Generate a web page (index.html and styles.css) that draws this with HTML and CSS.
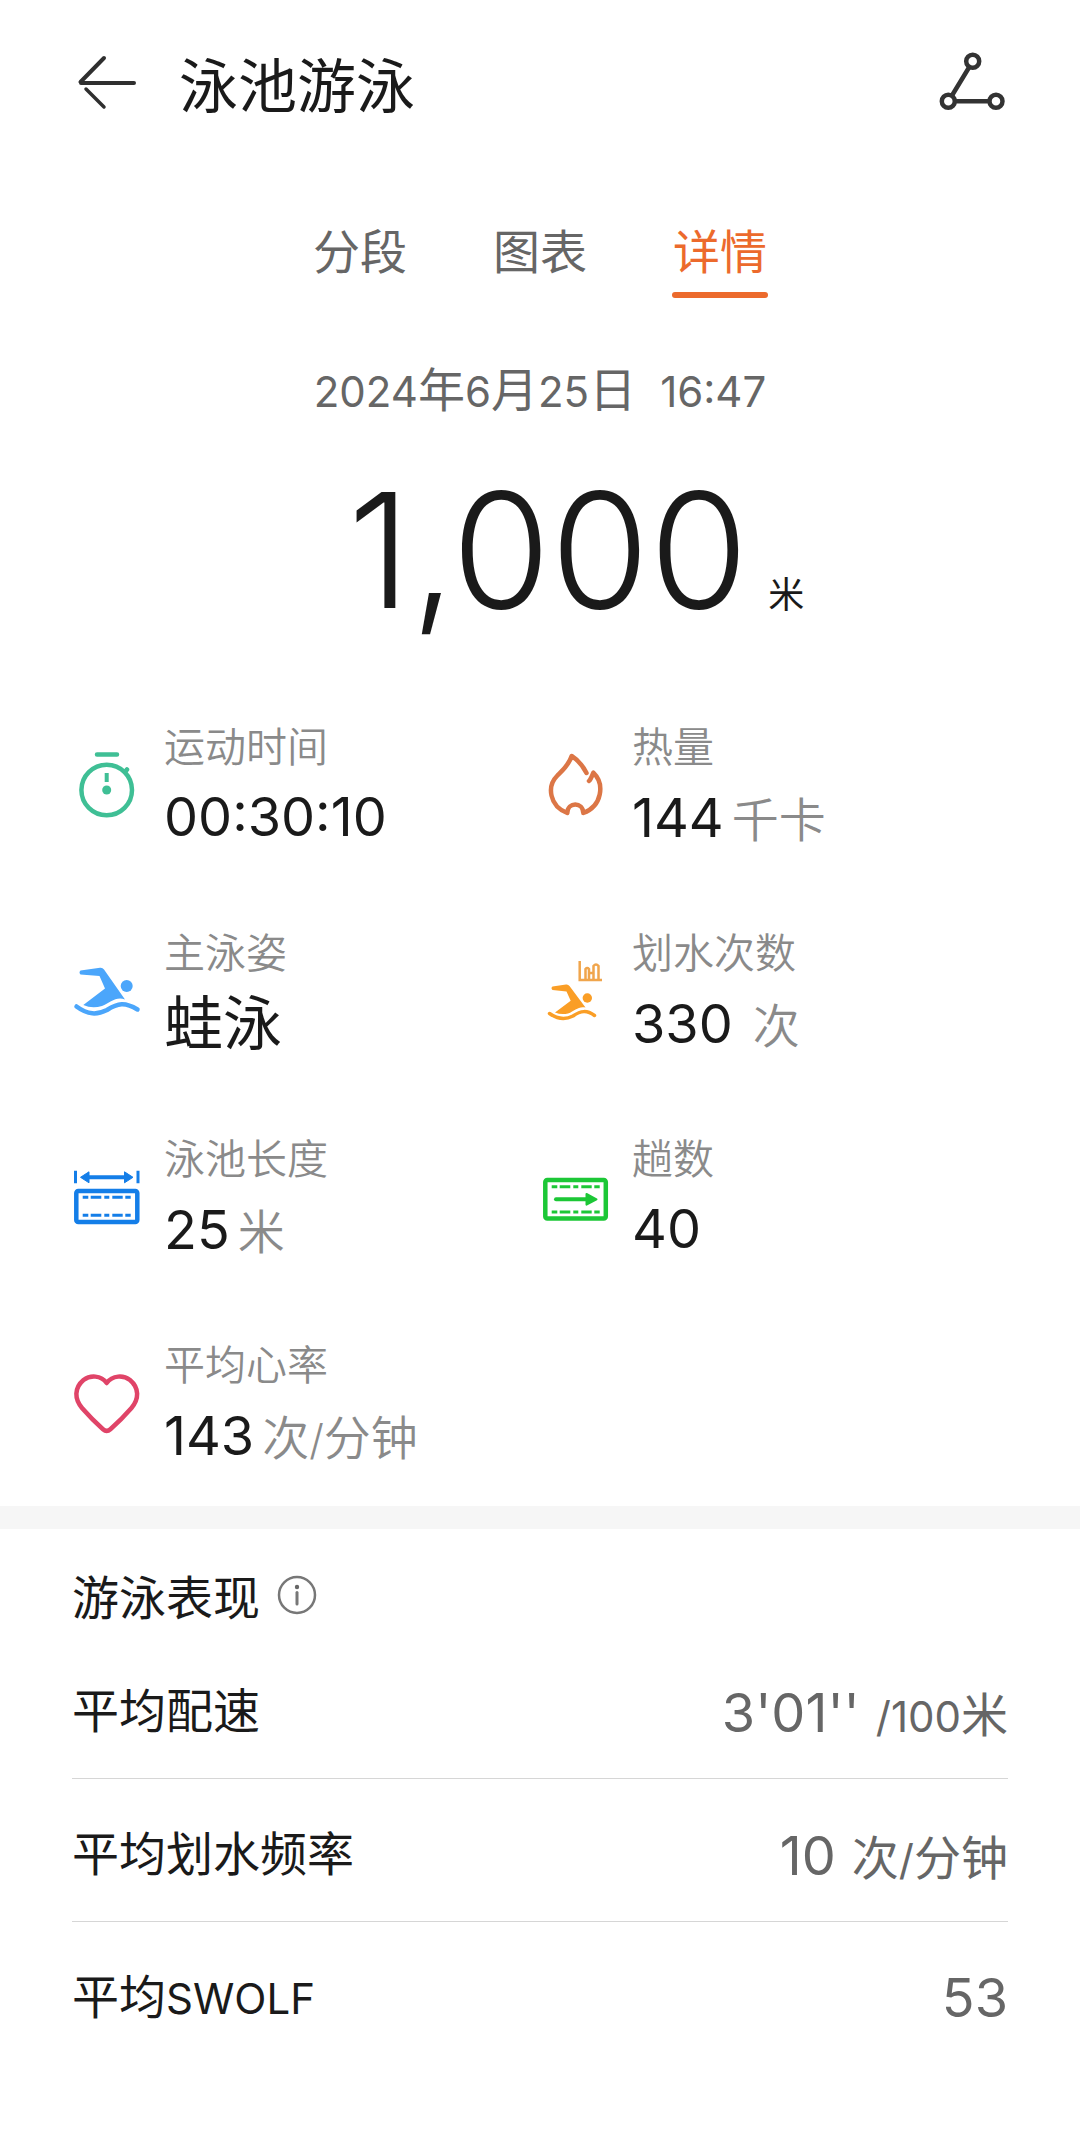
FILE: index.html
```html
<!DOCTYPE html>
<html lang="zh-CN">
<head>
<meta charset="utf-8">
<meta name="viewport" content="width=device-width, initial-scale=1">
<title>泳池游泳</title>
<link rel="stylesheet" href="styles.css">
</head>
<body>
<header class="topbar">
  <button class="icon-button" type="button" aria-label="返回">
    <svg class="icon" viewBox="0 0 68 68" fill="none" stroke="#2f2f2f" stroke-width="4" stroke-linecap="round"><path d="M32 9 L8.500 33 M9 34H62"/><path d="M14 40L32 58" stroke-width="3.500"/></svg>
  </button>
  <h1 class="title">泳池游泳</h1>
  <button class="icon-button" type="button" aria-label="轨迹分享">
    <svg class="icon" viewBox="0 0 68 68" fill="none" stroke="#333" stroke-width="4.500"><circle cx="32.700" cy="12.300" r="6.500"/><circle cx="8.300" cy="52.300" r="6.500"/><circle cx="56" cy="52.300" r="6.500"/><path d="M29.300 18L12 46.500M15 52.300H49.500"/></svg>
  </button>
</header>

<main>
  <nav class="tabs">
    <button class="tab" type="button">分段</button>
    <button class="tab" type="button">图表</button>
    <button class="tab active" type="button" aria-current="page">详情</button>
  </nav>

  <p class="date"><span><span class="num">2024</span>年<span class="num">6</span>月<span class="num">25</span>日</span><span class="num">16:47</span></p>
  <p class="distance"><span class="distance-value">1,000</span><span class="distance-unit">米</span></p>

  <dl class="stats">
    <div class="stat">
      <svg class="icon" viewBox="0 0 68 68" fill="none" stroke="#3fbf95" stroke-width="4.500" stroke-linecap="round"><circle cx="34.700" cy="37" r="25.300"/><path d="M25 1.500H45M53 19L55 16.500"/><path d="M34.700 20V29" stroke-width="4" stroke-linecap="butt"/><circle cx="34.700" cy="37" r="4.500" fill="#3fbf95" stroke="none"/></svg>
      <div class="stat-text"><dt>运动时间</dt><dd><span class="figure">00:30:10</span></dd></div>
    </div>
    <div class="stat">
      <svg class="icon" viewBox="0 0 68 68" fill="none" stroke="#dc7646" stroke-width="4.500" stroke-linecap="round" stroke-linejoin="round"><path d="M46.500 20C43 13 38 7 31.700 3C29 12 22 18 17 23C7 33 9 53 27.300 60C27.500 48.500 43 48.500 43.300 60C62 53 65 31 53.300 19.700C52 23 51 26 49 28"/></svg>
      <div class="stat-text"><dt>热量</dt><dd><span class="figure">144</span><span class="unit">千卡</span></dd></div>
    </div>
    <div class="stat">
      <svg class="icon" viewBox="0 0 68 68" fill="#4ba6fb"><path d="M8.500 11.500L28 8.700Q30.500 8.300 32 10.500L53 40.500C44 37 38 44 30 47Q20 50 11.300 46L33 29.500L27.500 17L8.500 15.500Q6.500 13.500 8.500 11.500Z"/><circle cx="54.700" cy="27" r="6"/><path d="M4.500 47.500C16 56 25 56 35 51C46 44 53 43 65.500 50.500" fill="none" stroke="#4ba6fb" stroke-width="4.500" stroke-linecap="round"/></svg>
      <div class="stat-text"><dt>主泳姿</dt><dd><span class="stroke-name">蛙泳</span></dd></div>
    </div>
    <div class="stat">
      <svg class="icon" viewBox="0 0 68 68" fill="#fa9e26"><path d="M12.500 27.500L26 25.500Q28 25 29.500 27L45.500 48.500C38 47 35 52 28 54.500Q21 56 15 53.500L30.700 41.700L26.500 32.500L12.500 31Q10.500 29 12.500 27.500Z"/><circle cx="47.300" cy="39" r="4.700"/><path d="M9.500 54.500C18 60.500 25 61 33 57C41 51.500 47 51 54.500 56.500" fill="none" stroke="#fa9e26" stroke-width="3.500" stroke-linecap="round"/><path d="M39.700 2V21H62M45.500 20V10Q47.200 8 49 10V20M49 20V14H53.500V20M53.500 20V7Q56 4 58.500 7V20" fill="none" stroke="#f0a54c" stroke-width="2.500"/></svg>
      <div class="stat-text"><dt>划水次数</dt><dd><span class="figure">330</span><span class="unit spaced">次</span></dd></div>
    </div>
    <div class="stat">
      <svg class="icon" viewBox="0 0 68 68" fill="none" stroke="#147ee8"><rect x="4.300" y="26" width="61" height="31" rx="2" stroke-width="4.500"/><path d="M3.500 5.700V18.300M66 5.700V18.300" stroke-width="3"/><path d="M14 12.300H56" stroke-width="4"/><path d="M8.500 12.300L17 6.800V17.800ZM61 12.300L52.500 6.800V17.800Z" fill="#147ee8" stroke-width="1" stroke-linejoin="round"/><path d="M10.700 32.300H16.300M18.700 32.300H29.300M32.300 32.300H37.300M40.300 32.300H50.700M53.300 32.300H58.700M10.700 50.300H16.300M18.700 50.300H29.300M32.300 50.300H37.300M40.300 50.300H50.700M53.300 50.300H58.700" stroke-width="3"/></svg>
      <div class="stat-text"><dt>泳池长度</dt><dd><span class="figure">25</span><span class="unit">米</span></dd></div>
    </div>
    <div class="stat">
      <svg class="icon" viewBox="0 0 68 68" fill="none" stroke="#1cc736"><rect x="5.300" y="15" width="60.500" height="38.500" rx="2" stroke-width="4.500"/><path d="M16 34.300H47" stroke-width="4" stroke-linecap="round"/><path d="M46.500 29L56.500 34.300L46.500 39.600Z" fill="#1cc736" stroke-width="2" stroke-linejoin="round"/><path d="M11.700 21.700H17.300M19.700 21.700H30.300M33.300 21.700H38.300M41.300 21.700H51.700M54.300 21.700H59.700M11.700 47H17.300M19.700 47H30.300M33.300 47H38.300M41.300 47H51.700M54.300 47H59.700" stroke-width="3"/></svg>
      <div class="stat-text"><dt>趟数</dt><dd><span class="figure">40</span></dd></div>
    </div>
    <div class="stat">
      <svg class="icon" viewBox="0 0 68 68" fill="none" stroke="#e04468" stroke-width="4.500" stroke-linejoin="round"><path d="M34.700 12C29 4 18 4 11.500 9C2 17 2.500 28 10 37Q20 48.500 31 58.200Q34.700 61.500 38.400 58.200Q49.500 48.500 59.500 37C67 28 67.500 17 58 9C51.500 4 40.500 4 34.700 12Z"/></svg>
      <div class="stat-text"><dt>平均心率</dt><dd><span class="figure">143</span><span class="unit">次<span class="num">/</span>分钟</span></dd></div>
    </div>
  </dl>

  <section class="performance">
    <div class="section-head">
      <h2>游泳表现</h2>
      <button class="info" type="button" aria-label="说明">
        <svg class="info-icon" viewBox="0 0 40 40" fill="none" stroke="#777" stroke-width="2.500"><circle cx="20" cy="20" r="18"/><circle cx="20" cy="12" r="2.200" fill="#666" stroke="none"/><path d="M20 17.500V29" stroke-width="3" stroke-linecap="round"/></svg>
      </button>
    </div>
    <dl class="metrics">
      <div class="metric"><dt>平均配速</dt><dd><span class="figure">3'01''</span><span class="per"><span class="num">/100</span>米</span></dd></div>
      <div class="metric"><dt>平均划水频率</dt><dd><span class="figure">10</span><span class="per">次<span class="num">/</span>分钟</span></dd></div>
      <div class="metric"><dt>平均<span class="num">SWOLF</span></dt><dd><span class="figure">53</span></dd></div>
    </dl>
  </section>
</main>
</body>
</html>
```
FILE: styles.css
```css
* {
  box-sizing: border-box;
}

body,
h1,
h2,
p,
dl,
dd {
  margin: 0;
}

body {
  background: #fff;
  color: #1a1a1a;
  font-family: "Noto Sans CJK SC", sans-serif;
  font-size: 47px;
  font-weight: 400;
}

h1,
h2 {
  font-weight: 400;
}

button {
  border: 0;
  padding: 0;
  background: none;
  color: inherit;
  font: inherit;
}

svg {
  display: block;
}

.icon {
  width: 68px;
  height: 68px;
  flex: none;
  overflow: visible;
}

.num,
.figure,
.distance-value {
  font-family: Inter, "Noto Sans CJK SC", sans-serif;
}

.num {
  font-size: 42px;
}

.figure {
  font-size: 54px;
}

.topbar {
  display: flex;
  align-items: center;
  padding: 47px 4px 0 72px;
}

.title {
  flex: 1;
  padding-left: 39px;
  font-size: 59px;
  line-height: 72px;
}

.topbar .icon-button:last-child {
  padding-right: 68px;
}

.tabs {
  display: flex;
  justify-content: center;
  gap: 84px;
  margin-top: 94px;
}

.tab {
  position: relative;
  width: 96px;
  height: 85px;
  padding-bottom: 13px;
  color: #666;
  line-height: 72px;
}

.tab.active {
  color: #ec6a2c;
}

.tab.active::after {
  content: "";
  position: absolute;
  right: 0;
  bottom: 0;
  left: 0;
  height: 6px;
  border-radius: 3px;
  background: #ec6a2c;
}

.date {
  display: flex;
  justify-content: center;
  align-items: baseline;
  gap: 24px;
  margin-top: 55px;
  color: #666;
  line-height: 68px;
}

.distance {
  display: flex;
  justify-content: center;
  align-items: baseline;
  gap: 20px;
  padding: 24px 0 0 72px;
  line-height: 200px;
}

.distance-value {
  font-size: 160px;
  font-weight: 300;
}

.distance-unit {
  font-size: 36px;
}

.stats {
  display: grid;
  grid-template-columns: 1fr 1fr;
  row-gap: 64px;
  padding: 24px 72px 30px;
}

.stat {
  display: flex;
  align-items: center;
  gap: 24px;
}

.stat dt {
  padding-bottom: 4px;
  color: #8a8a8a;
  font-size: 41px;
  font-weight: 350;
  line-height: 56px;
}

.stat dd {
  display: flex;
  align-items: baseline;
  gap: 8px;
  height: 82px;
  line-height: 82px;
}

.stat .stroke-name {
  font-size: 59px;
  line-height: 76px;
}

.unit {
  color: #8a8a8a;
  font-weight: 350;
}

.unit.spaced {
  padding-left: 12px;
}

.performance {
  padding: 32px 72px 48px;
  border-top: 23px solid #f6f6f6;
}

.section-head {
  display: flex;
  align-items: center;
  gap: 17px;
  height: 68px;
}

.section-head h2 {
  font-size: 47px;
  line-height: 68px;
}

.info-icon {
  width: 40px;
  height: 40px;
}

.metrics {
  padding-top: 7px;
}

.metric {
  display: flex;
  justify-content: space-between;
  align-items: center;
  height: 143px;
  border-bottom: 1px solid #d6d6d6;
}

.metric:last-child {
  border-bottom: 0;
}

.metric dd {
  display: flex;
  align-items: baseline;
  gap: 16px;
  padding-top: 8px;
  color: #666;
}
```
